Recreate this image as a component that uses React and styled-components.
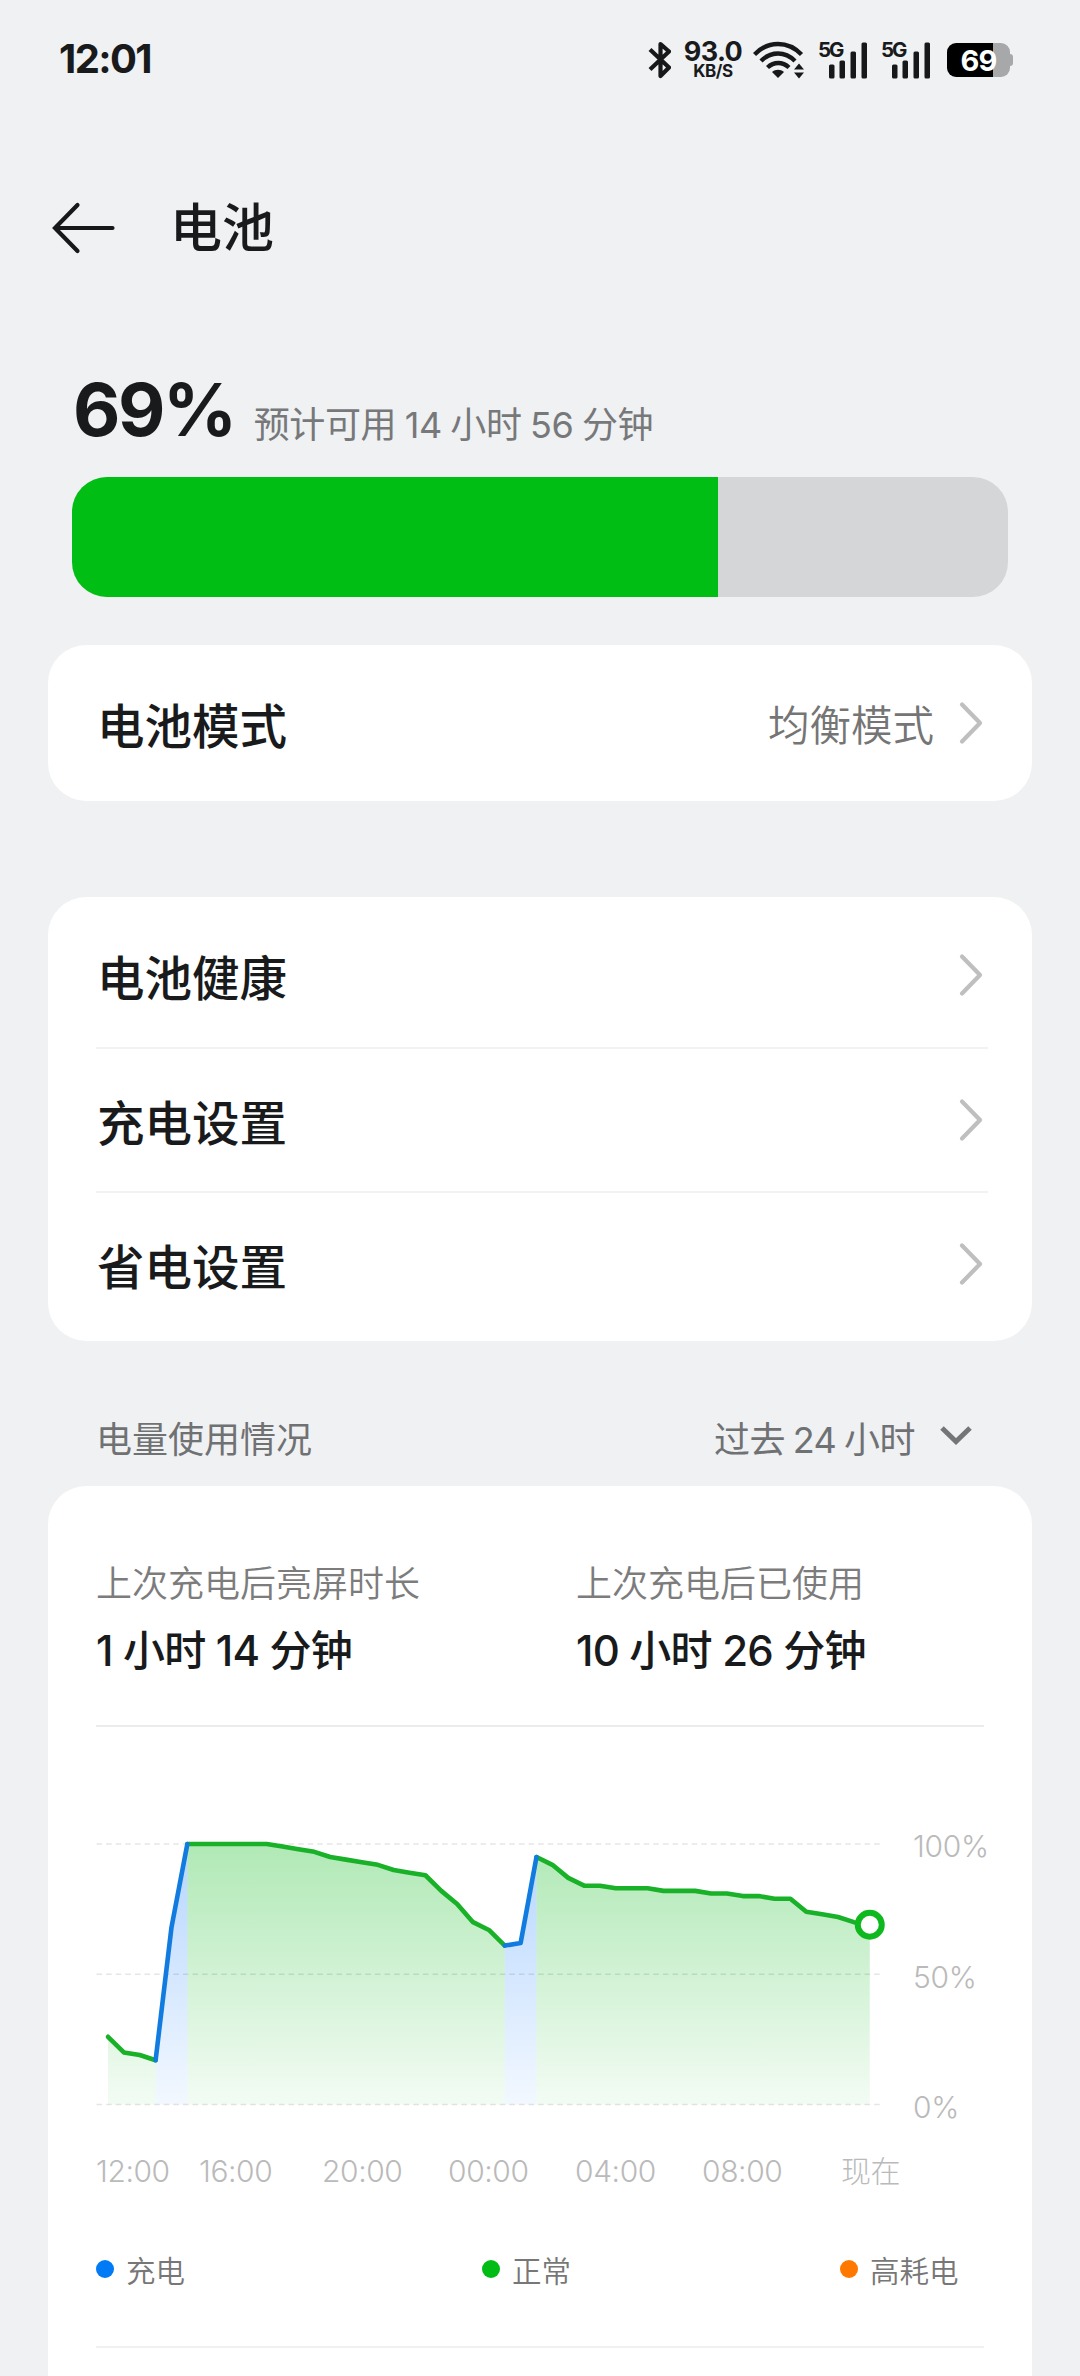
import React from "react";
import styled, { createGlobalStyle } from "styled-components";

const GlobalStyle = createGlobalStyle`
  * {
    box-sizing: border-box;
  }
  body {
    margin: 0;
    background: #eff1f3;
    color: #191a1c;
    font-family: Inter, "Noto Sans CJK SC", sans-serif;
  }
`;

const Screen = styled.div`
  display: flex;
  flex-direction: column;
  width: 1080px;
  height: 2376px;
  overflow: hidden;
  padding: 0 48px;

  > * {
    flex: none;
  }
`;

const StatusBar = styled.div`
  display: flex;
  align-items: center;
  justify-content: space-between;
  height: 120px;
  padding: 0 19px 0 11px;
`;

const Clock = styled.div`
  margin-top: -2px;
  font-size: 40px;
  font-weight: 700;
  letter-spacing: -1.6px;
  line-height: 48px;
`;

const StatusIcons = styled.div`
  display: flex;
  align-items: center;
  height: 38px;

  svg {
    display: block;
  }
`;

const NetSpeed = styled.div`
  display: flex;
  flex-direction: column;
  align-items: center;
  width: 60px;
  margin: 0 10px 0 12px;
  font-weight: 700;
`;

const Speed = styled.div`
  font-size: 27px;
  line-height: 22px;
  letter-spacing: -0.6px;
`;

const SpeedUnit = styled.div`
  font-size: 17px;
  line-height: 17px;
  letter-spacing: -0.4px;
`;

const Signal = styled.div`
  display: flex;
  align-items: flex-start;
  width: 50px;
  height: 38px;
  margin-left: 13px;
`;

const SignalType = styled.span`
  width: 11px;
  font-size: 20.5px;
  font-weight: 700;
  line-height: 18px;
  letter-spacing: -2px;
  white-space: nowrap;
`;

const BatteryIcon = styled.div`
  display: flex;
  align-items: center;
  margin-left: 16px;
`;

const BatteryBody = styled.div`
  display: flex;
  align-items: center;
  justify-content: center;
  width: 63px;
  height: 34px;
  border-radius: 9px;
  background: linear-gradient(90deg, #000 46px, #a7a8aa 46px);
  color: #fff;
  font-size: 29px;
  font-weight: 700;
  letter-spacing: -0.8px;
`;

const BatteryTip = styled.div`
  width: 3px;
  height: 12px;
  border-radius: 0 3px 3px 0;
  background: #a7a8aa;
`;

const Header = styled.header`
  display: flex;
  align-items: center;
  height: 216px;
  gap: 54px;
  padding: 0 4px;
`;

const Title = styled.h1`
  margin: 2px 0 0;
  font-size: 52px;
  font-weight: 500;
  line-height: 72px;
`;

const Summary = styled.div`
  display: flex;
  align-items: baseline;
  height: 141px;
  padding: 30px 25px 0;
`;

const Percent = styled.div`
  font-size: 73px;
  font-weight: 700;
  line-height: 88px;
  letter-spacing: -2.4px;
`;

const Estimate = styled.div`
  margin-left: 19px;
  padding-top: 1px;
  color: #77787a;
  font-size: 36px;
  letter-spacing: -0.4px;
  word-spacing: -1.2px;
  transform: translateY(2px);
`;

const LevelBar = styled.div`
  height: 120px;
  margin: 0 24px 48px;
  overflow: hidden;
  border-radius: 35px;
  background: #d5d6d8;
`;

const LevelFill = styled.div`
  height: 100%;
  background: #00be13;
`;

const Card = styled.section`
  margin-bottom: ${({ $gap }) => $gap || 0}px;
  padding: ${({ $pad }) => $pad || "6px 44px 6px 48px"};
  border-radius: 38px;
  background: #fff;
`;

const Row = styled.div`
  display: flex;
  align-items: center;
  height: 144px;
  padding-right: 4px;
  border-top: ${({ $line }) => ($line ? "2px solid #f2f2f3" : "0")};
`;

const RowLabel = styled.div`
  flex: 1;
  padding-left: 1px;
  font-size: 47.5px;
  font-weight: 500;
`;

const RowValue = styled.div`
  margin-right: 24px;
  color: #757575;
  font-size: 41.5px;
  font-weight: 350;
`;

const SectionHead = styled.div`
  display: flex;
  align-items: center;
  justify-content: space-between;
  height: 145px;
  padding: 47px 59px 0 48px;
  color: #707173;
  font-size: 36px;
`;

const Picker = styled.div`
  display: flex;
  align-items: center;
  gap: 24px;
  letter-spacing: -0.5px;
  word-spacing: -2px;
`;

const Stats = styled.div`
  display: grid;
  grid-template-columns: 480px 1fr;
  height: 241px;
  padding-top: 71px;
  border-bottom: 2px solid #ececec;
`;

const StatLabel = styled.div`
  color: #7c7c7c;
  font-size: 36px;
  font-weight: 350;
  line-height: 54px;
`;

const StatValue = styled.div`
  margin-top: 10px;
  font-size: 42px;
  font-weight: 500;
  line-height: 60px;
  letter-spacing: -0.8px;
`;

const ChartArea = styled.div`
  display: flex;
  height: 290px;
  margin-top: 102px;
`;

const ChartSvg = styled.svg`
  flex: none;
  width: 802px;
  height: 290px;
`;

const ScaleLabels = styled.div`
  display: flex;
  flex-direction: column;
  justify-content: space-between;
  height: 297px;
  margin: -1px 0 0 15px;
  color: #bababa;
  font-size: 30px;
  font-weight: 300;
  line-height: 36px;
  letter-spacing: -0.3px;
`;

const TimeAxis = styled.div`
  display: flex;
  height: 44px;
  margin-top: 30px;
  color: #bababa;
  font-size: 30px;
  font-weight: 300;
  line-height: 44px;
  letter-spacing: -0.4px;
  white-space: nowrap;
`;

const TimeLabel = styled.div`
  flex: none;
  width: ${({ $w }) => $w}px;
`;

const Legend = styled.div`
  display: grid;
  grid-template-columns: 386px 358px auto;
  height: 155px;
  padding-top: 54px;
  border-bottom: 2px solid #f0f0f1;
`;

const LegendItem = styled.div`
  display: flex;
  align-items: center;
  height: 44px;
  gap: 12px;
  color: #777;
  font-size: 29.5px;
  font-weight: 350;
`;

const Dot = styled.span`
  width: 18px;
  height: 18px;
  border-radius: 50%;
  background: ${({ $color }) => $color};
`;

const level = 69;

// one reading every half hour
const readings = [
  26, 20, 19, 17, 68, 100, 100, 100, 100, 100, 100, 99, 98, 97, 95, 94, 93, 92,
  90, 89, 88, 82, 77, 70, 67, 61, 62, 95, 92, 87, 84, 84, 83, 83, 83, 82, 82,
  82, 81, 81, 80, 80, 79, 79, 74, 73, 72, 70, 69,
];

const segments = [
  { from: 0, to: 3, type: "normal" },
  { from: 5, to: 25, type: "normal" },
  { from: 27, to: 48, type: "normal" },
  { from: 3, to: 5, type: "charge" },
  { from: 25, to: 27, type: "charge" },
];

const times = [
  { label: "12:00", width: 103 },
  { label: "16:00", width: 123 },
  { label: "20:00", width: 126 },
  { label: "00:00", width: 127 },
  { label: "04:00", width: 127 },
  { label: "08:00", width: 139 },
  { label: "现在", width: 60 },
];

const legend = [
  { label: "充电", color: "#007bf5" },
  { label: "正常", color: "#02bc16" },
  { label: "高耗电", color: "#ff7900" },
];

const TOP = 15;
const BOTTOM = 275.5;
const px = (i) => 12 + i * 15.87;
const py = (v) => BOTTOM - (v * (BOTTOM - TOP)) / 100;

const linePoints = ({ from, to }) =>
  readings
    .slice(from, to + 1)
    .map((v, i) => `${px(from + i)},${py(v)}`)
    .join(" ");

const areaPoints = (seg) =>
  `${px(seg.from)},${BOTTOM} ${linePoints(seg)} ${px(seg.to)},${BOTTOM}`;

const BatteryChart = () => (
  <ChartSvg viewBox="0 0 802 290">
    <defs>
      <linearGradient id="normal" gradientUnits="userSpaceOnUse" x1="0" y1={TOP} x2="0" y2={BOTTOM}>
        <stop offset="0" stopColor="#10bb20" stopOpacity="0.33" />
        <stop offset="1" stopColor="#10bb20" stopOpacity="0.05" />
      </linearGradient>
      <linearGradient id="charge" gradientUnits="userSpaceOnUse" x1="0" y1={TOP} x2="0" y2={BOTTOM}>
        <stop offset="0" stopColor="#0a75ff" stopOpacity="0.3" />
        <stop offset="1" stopColor="#0a75ff" stopOpacity="0.05" />
      </linearGradient>
    </defs>
    {segments.map((seg) => (
      <polygon key={seg.from} points={areaPoints(seg)} fill={`url(#${seg.type})`} />
    ))}
    {[100, 50, 0].map((v) => (
      <line
        key={v}
        x1="0.5"
        x2="785"
        y1={py(v)}
        y2={py(v)}
        stroke="#000"
        strokeOpacity="0.1"
        strokeWidth="1.5"
        strokeDasharray="5.6 4"
      />
    ))}
    {segments.map((seg) => (
      <polyline
        key={seg.from}
        points={linePoints(seg)}
        fill="none"
        stroke={seg.type === "charge" ? "#127be0" : "#18b128"}
        strokeWidth="4.6"
        strokeLinecap="round"
        strokeLinejoin="round"
      />
    ))}
    <circle cx={px(48)} cy={py(level)} r="12" fill="#fff" stroke="#10b81f" strokeWidth="6" />
  </ChartSvg>
);

const BackIcon = () => (
  <svg width="64" height="54" viewBox="0 0 64 54" fill="none" stroke="#17181a" strokeWidth="4.2" strokeLinecap="round">
    <path d="M3.5 27H60.5M25.5 4L3 27L25.5 50" />
  </svg>
);

const ChevronRight = () => (
  <svg width="26" height="46" viewBox="0 0 26 46" fill="none" stroke="#bfbfbf" strokeWidth="4.2" strokeLinecap="round" strokeLinejoin="round">
    <path d="M4 4.5L22 23L4 41.5" />
  </svg>
);

const ChevronDown = () => (
  <svg width="34" height="22" viewBox="0 0 34 22" fill="none" stroke="#747577" strokeWidth="5">
    <path d="M3 2L17 15.5L31 2" />
  </svg>
);

const BluetoothIcon = () => (
  <svg width="24" height="38" viewBox="0 0 24 38" fill="none" stroke="#17181a" strokeWidth="4.2" strokeLinejoin="round">
    <path d="M3 8.5L22 26.5L13.5 35V3L22 10.5L3 28.5" />
  </svg>
);

const WifiIcon = () => (
  <svg width="52" height="38" viewBox="0 0 52 38" fill="none" stroke="#17181a" strokeWidth="4.4">
    <path d="M1.5 13.5C15-.5 35-.5 48.5 13.5M8 20C18 10 32 10 42 20M14.5 26.5C21 20.5 29.5 20.5 36 26.5" />
    <path d="M25 37L19 31C22.5 28 27.5 28 31 31Z" fill="#17181a" stroke="none" />
    <path d="M46 22.5L51 28.5H41ZM46 37.5L41 31.5H51Z" fill="#17181a" stroke="none" />
  </svg>
);

const SignalBars = () => (
  <svg width="39" height="38" viewBox="0 0 39 38" fill="#17181a">
    <rect x="0" y="23.5" width="5.5" height="14" rx="1.5" />
    <rect x="10.5" y="19.5" width="5.5" height="18" rx="1.5" />
    <rect x="21.5" y="10.5" width="5.5" height="27" rx="1.5" />
    <rect x="32.5" y="1.5" width="5.5" height="36" rx="1.5" />
  </svg>
);

const App = () => {
  return (
    <>
      <GlobalStyle />
      <Screen>
        <StatusBar>
          <Clock>12:01</Clock>
          <StatusIcons>
            <BluetoothIcon />
            <NetSpeed>
              <Speed>93.0</Speed>
              <SpeedUnit>KB/S</SpeedUnit>
            </NetSpeed>
            <WifiIcon />
            <Signal>
              <SignalType>5G</SignalType>
              <SignalBars />
            </Signal>
            <Signal>
              <SignalType>5G</SignalType>
              <SignalBars />
            </Signal>
            <BatteryIcon>
              <BatteryBody>{level}</BatteryBody>
              <BatteryTip />
            </BatteryIcon>
          </StatusIcons>
        </StatusBar>

        <Header>
          <BackIcon />
          <Title>电池</Title>
        </Header>

        <Summary>
          <Percent>{level}%</Percent>
          <Estimate>预计可用 14 小时 56 分钟</Estimate>
        </Summary>
        <LevelBar>
          <LevelFill style={{ width: `${level}%` }} />
        </LevelBar>

        <Card $gap={96}>
          <Row>
            <RowLabel>电池模式</RowLabel>
            <RowValue>均衡模式</RowValue>
            <ChevronRight />
          </Row>
        </Card>

        <Card>
          {["电池健康", "充电设置", "省电设置"].map((label, i) => (
            <Row key={label} $line={i > 0}>
              <RowLabel>{label}</RowLabel>
              <ChevronRight />
            </Row>
          ))}
        </Card>

        <SectionHead>
          <div>电量使用情况</div>
          <Picker>
            过去 24 小时
            <ChevronDown />
          </Picker>
        </SectionHead>

        <Card $pad="0 48px 100px">
          <Stats>
            <div>
              <StatLabel>上次充电后亮屏时长</StatLabel>
              <StatValue>1 小时 14 分钟</StatValue>
            </div>
            <div>
              <StatLabel>上次充电后已使用</StatLabel>
              <StatValue>10 小时 26 分钟</StatValue>
            </div>
          </Stats>
          <ChartArea>
            <BatteryChart />
            <ScaleLabels>
              <span>100%</span>
              <span>50%</span>
              <span>0%</span>
            </ScaleLabels>
          </ChartArea>
          <TimeAxis>
            {times.map((t) => (
              <TimeLabel key={t.label} $w={t.width}>
                {t.label}
              </TimeLabel>
            ))}
          </TimeAxis>
          <Legend>
            {legend.map((item) => (
              <LegendItem key={item.label}>
                <Dot $color={item.color} />
                {item.label}
              </LegendItem>
            ))}
          </Legend>
        </Card>
      </Screen>
    </>
  );
};

export default App;
